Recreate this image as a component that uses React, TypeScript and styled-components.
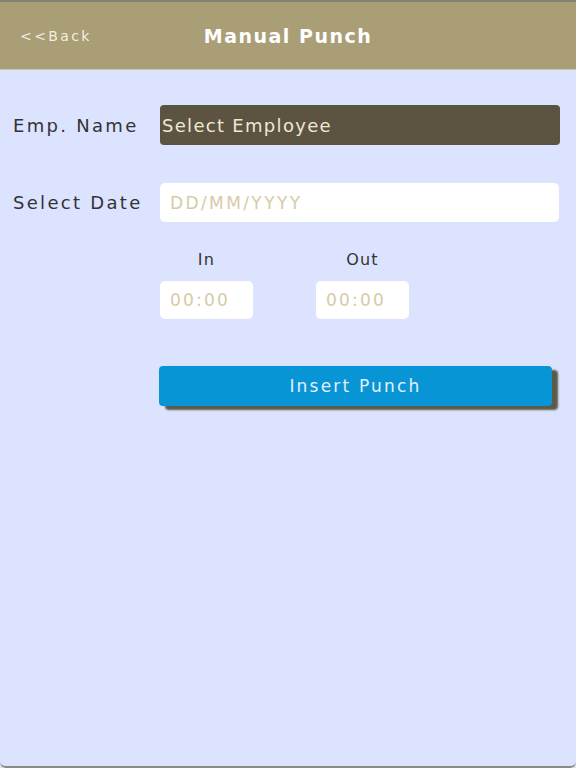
import React from "react";
import styled, { createGlobalStyle } from "styled-components";

const colors = {
  page: "#dce3fe",
  header: "#aa9e76",
  picker: "#5c5340",
  placeholder: "#d6cba6",
  label: "#333333",
  button: "#0895d6",
};

const GlobalStyle = createGlobalStyle`
  html, body {
    margin: 0;
    padding: 0;
    background: ${colors.page};
  }
  body {
    font-family: "DejaVu Sans", "Liberation Sans", sans-serif;
  }
`;

const App: React.FC = () => {
  return (
    <>
      <GlobalStyle />
      <ScreenStyled>
        <HeaderStyled>
          <BackLinkStyled>&lt;&lt;Back</BackLinkStyled>
          <TitleStyled>Manual Punch</TitleStyled>
        </HeaderStyled>

        <FormStyled>
          <RowStyled>
            <LabelStyled>Emp. Name</LabelStyled>
            <PickerStyled>Select Employee</PickerStyled>
          </RowStyled>

          <RowStyled>
            <LabelStyled>Select Date</LabelStyled>
            <FieldStyled>DD/MM/YYYY</FieldStyled>
          </RowStyled>

          <TimesStyled>
            <TimeColumnStyled>
              <TimeLabelStyled>In</TimeLabelStyled>
              <TimeFieldStyled>00:00</TimeFieldStyled>
            </TimeColumnStyled>
            <TimeColumnStyled>
              <TimeLabelStyled>Out</TimeLabelStyled>
              <TimeFieldStyled>00:00</TimeFieldStyled>
            </TimeColumnStyled>
          </TimesStyled>

          <ButtonStyled type="button">Insert Punch</ButtonStyled>
        </FormStyled>
      </ScreenStyled>
    </>
  );
};

export default App;

const ScreenStyled = styled.div`
  height: 768px;
  box-sizing: border-box;
  background: ${colors.page};
  border-bottom: 2px solid #8a8d86;
  border-radius: 0 0 6px 6px;
  overflow: hidden;
`;

const HeaderStyled = styled.header`
  height: 70px;
  box-sizing: border-box;
  border-top: 2px solid #7f8472;
  border-bottom: 1px solid #c9c6b4;
  background: ${colors.header};
  display: grid;
  grid-template-columns: 1fr auto 1fr;
  align-items: center;
  padding: 0 20px;
`;

const BackLinkStyled = styled.span`
  color: #f3eedd;
  font-size: 14px;
  letter-spacing: 2.4px;
  justify-self: start;
`;

const TitleStyled = styled.h1`
  margin: 0;
  color: #ffffff;
  font-size: 19px;
  font-weight: bold;
  letter-spacing: 1.5px;
`;

const FormStyled = styled.main`
  display: flex;
  flex-direction: column;
  padding: 35px 16px 0 13px;
`;

const RowStyled = styled.div`
  display: grid;
  grid-template-columns: 147px 1fr;
  align-items: center;
  margin-bottom: 38px;
`;

const LabelStyled = styled.label`
  color: ${colors.label};
  font-size: 18px;
  letter-spacing: 2.3px;
  white-space: nowrap;
`;

const PickerStyled = styled.div`
  height: 40px;
  box-sizing: border-box;
  display: flex;
  align-items: center;
  padding-left: 2px;
  border-radius: 4px;
  background: ${colors.picker};
  color: #eee8d6;
  font-size: 18px;
  letter-spacing: 1.3px;
`;

const FieldStyled = styled.div`
  height: 39px;
  box-sizing: border-box;
  display: flex;
  align-items: center;
  padding-left: 10px;
  border-radius: 5px;
  background: #ffffff;
  color: ${colors.placeholder};
  font-size: 17px;
  letter-spacing: 2.4px;
  margin-right: 1px;
`;

const TimesStyled = styled.div`
  display: flex;
  gap: 63px;
  margin: -10px 0 0 147px;
`;

const TimeColumnStyled = styled.div`
  display: flex;
  flex-direction: column;
  align-items: center;
  gap: 11px;
`;

const TimeLabelStyled = styled.span`
  color: ${colors.label};
  font-size: 16px;
  letter-spacing: 1.2px;
  line-height: 20px;
`;

const TimeFieldStyled = styled.div`
  width: 93px;
  height: 38px;
  box-sizing: border-box;
  display: flex;
  align-items: center;
  padding-left: 10px;
  border-radius: 5px;
  background: #ffffff;
  color: ${colors.placeholder};
  font-size: 17px;
  letter-spacing: 2.2px;
`;

const ButtonStyled = styled.button`
  margin: 47px 0 0 146px;
  width: 393px;
  height: 40px;
  border: none;
  border-radius: 4px;
  background: ${colors.button};
  box-shadow: 6px 4px 2px #5c5a48;
  color: #e2f0f8;
  font-family: inherit;
  font-size: 17px;
  letter-spacing: 2.2px;
  cursor: pointer;
`;
